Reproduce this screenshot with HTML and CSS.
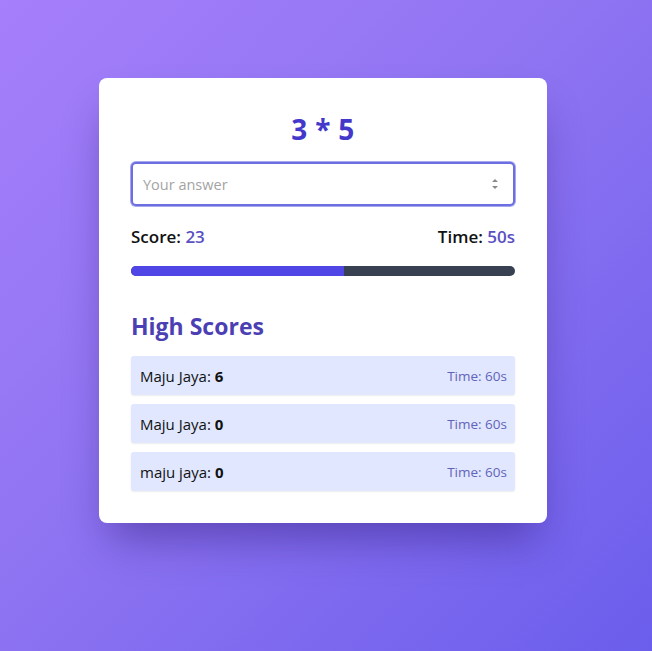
FILE: index.html
```html
<!DOCTYPE html>
<html lang="en">
<head>
<meta charset="utf-8">
<title>Math Game</title>
<link rel="stylesheet" href="styles.css">
</head>
<body>
<main class="page">
  <section class="card">
    <h1 class="question">3 * 5</h1>
    <div class="input-wrap">
      <input class="answer" type="text" placeholder="Your answer">
      <svg class="spin" width="8" height="16" viewBox="0 0 8 16" aria-hidden="true">
        <path d="M1 6 L4 3 L7 6 Z" fill="#8a8a8a"/>
        <path d="M1 10 L4 13 L7 10 Z" fill="#8a8a8a"/>
      </svg>
    </div>
    <div class="stats">
      <div><span class="label">Score:</span> <span class="value">23</span></div>
      <div><span class="label">Time:</span> <span class="value">50s</span></div>
    </div>
    <div class="bar"><div class="bar-fill" style="width:55.5%"></div></div>
    <h2 class="hs-title">High Scores</h2>
    <ul class="hs-list">
      <li class="hs-item"><span>Maju Jaya: <b>6</b></span><span class="hs-time">Time: 60s</span></li>
      <li class="hs-item"><span>Maju Jaya: <b>0</b></span><span class="hs-time">Time: 60s</span></li>
      <li class="hs-item"><span>maju jaya: <b>0</b></span><span class="hs-time">Time: 60s</span></li>
    </ul>
  </section>
</main>
</body>
</html>
```

FILE: styles.css
```css
* { box-sizing: border-box; }
html, body { margin: 0; height: 100%; }
body {
  font-family: "Open Sans", "Noto Sans", sans-serif;
  background: linear-gradient(135deg, #a67ffb 0%, #8f74f2 45%, #6b5eec 100%);
  color: #111;
}
.page {
  min-height: 651px;
  display: flex;
  justify-content: center;
  padding-top: 78px;
  padding-right: 6px;
}
.card {
  width: 448px;
  height: 445px;
  background: #fff;
  border-radius: 8px;
  padding: 32px;
  box-shadow: 0 25px 40px -10px rgba(40, 20, 110, 0.45);
  display: flex;
  flex-direction: column;
}
.question {
  margin: 0;
  text-align: center;
  font-size: 28px;
  line-height: 38px;
  font-weight: 700;
  color: #4338ca;
  letter-spacing: 0.3px;
}
.input-wrap { margin-top: 14px; position: relative; }
.answer {
  width: 100%;
  height: 44px;
  border: 2px solid #6d6ee0;
  border-radius: 5px;
  box-shadow: 0 0 0 1px #a5a8f0;
  padding: 0 10px;
  font-family: inherit;
  font-size: 14.5px;
  outline: none;
  color: #111;
}
.answer::placeholder { color: #a3a3a3; }
.spin { position: absolute; right: 16px; top: 14px; }
.stats {
  margin-top: 19px;
  display: flex;
  justify-content: space-between;
  font-size: 17px;
  line-height: 24px;
}
.label { font-weight: 600; color: #111; }
.value { color: #5a50c2; font-weight: 600; }
.bar {
  margin-top: 17px;
  height: 10px;
  background: #374151;
  border-radius: 5px;
  overflow: hidden;
}
.bar-fill { height: 100%; background: #4f46e5; }
.hs-title {
  margin: 34px 0 0;
  font-size: 23px;
  line-height: 32px;
  font-weight: 700;
  color: #4c3fb4;
}
.hs-list {
  list-style: none;
  margin: 14px 0 0;
  padding: 0;
  display: flex;
  flex-direction: column;
  gap: 9px;
}
.hs-item {
  height: 39px;
  background: #e0e7ff;
  border-radius: 3px;
  box-shadow: 0 1px 2px rgba(0,0,0,0.08);
  display: flex;
  align-items: center;
  justify-content: space-between;
  padding: 0 8px 0 9px;
  font-size: 15px;
  color: #111;
}
.hs-item b { font-weight: 700; }
.hs-time { font-size: 13.5px; color: #6264b8; }
```
